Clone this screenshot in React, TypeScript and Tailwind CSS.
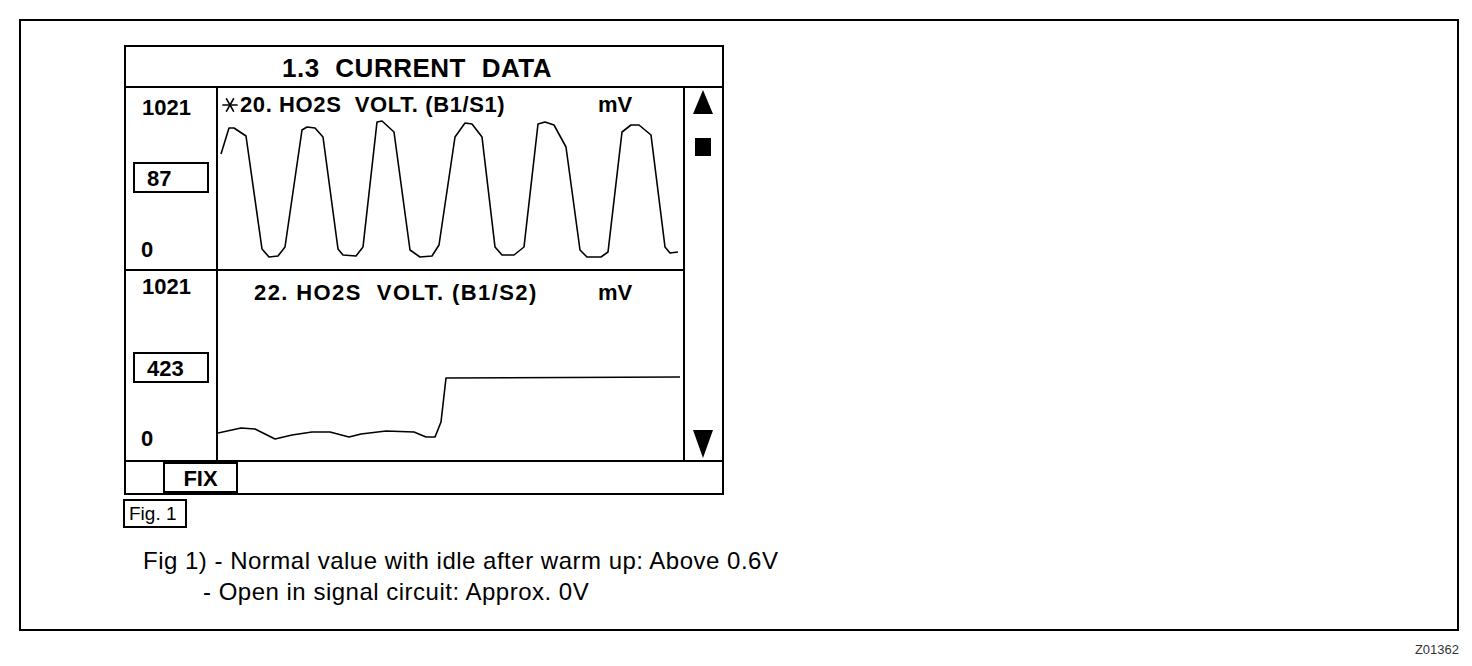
import React from "react";

// page coordinates, the svg viewBox of each chart cell starts where the cell does
const wave1 =
  "221,154 229,128 234,128 246,136 262,249 269,257 278,256 285,247 302,130 307,127 315,128 323,137 338,249 343,255 356,256 363,247 377,122 382,121 394,132 410,250 420,257 432,256 439,245 455,137 465,123 472,124 482,137 495,247 502,255 514,255 524,247 538,124 545,122 554,125 566,147 580,250 587,257 601,257 608,252 622,132 631,125 639,125 651,135 665,247 670,253 678,252";
const wave2 =
  "218,433 241,428 255,429 275,439 292,435 312,432 330,432 349,437 361,434 386,431 414,432 426,437 435,437 441,422 446,378 680,377";

const Star = () => (
  <svg width="16" height="16" viewBox="0 0 16 16" className="mr-[2px] inline-block">
    <g stroke="black" strokeWidth="1.7" strokeLinecap="round">
      <line x1="1" y1="8" x2="15" y2="8" />
      <line x1="11.5" y1="1.9" x2="4.5" y2="14.1" />
      <line x1="4.5" y1="1.9" x2="11.5" y2="14.1" />
    </g>
  </svg>
);

const ValueBox = ({ value }: { value: string }) => (
  <div className="ml-[7px] flex h-[31px] w-[76px] items-center border-2 border-black pl-[12px] pt-[2px] leading-[22px]">
    {value}
  </div>
);

const Row = ({
  value,
  title,
  star,
  points,
  viewBox,
  rowClass,
  labelClass,
  headClass,
  titleClass,
  boxGap,
}: {
  value: string;
  title: string;
  star?: boolean;
  points: string;
  viewBox: string;
  rowClass: string;
  labelClass: string;
  headClass: string;
  titleClass: string;
  boxGap: string;
}) => (
  <div className={"flex " + rowClass}>
    <div className={"flex w-[92px] flex-col border-r-2 border-black " + labelClass}>
      <div className="pl-[16px] leading-[22px]">1021</div>
      <div className={boxGap}>
        <ValueBox value={value} />
      </div>
      <div className="mt-auto pl-[15px] leading-[22px]">0</div>
    </div>
    <div className="relative w-[465px]">
      <svg
        className="absolute inset-0"
        width="465"
        height="100%"
        viewBox={viewBox}
        preserveAspectRatio="none"
      >
        <polyline
          points={points}
          fill="none"
          stroke="black"
          strokeWidth="1.6"
          strokeLinejoin="round"
        />
      </svg>
      <div className={"relative grid leading-[22px] " + headClass}>
        <div className={"flex items-center whitespace-pre " + titleClass}>
          {star && <Star />}
          {title}
        </div>
        <div>mV</div>
      </div>
    </div>
  </div>
);

const Arrow = ({ up }: { up?: boolean }) => (
  <svg width="20" height={up ? 24 : 28} viewBox={up ? "0 0 20 24" : "0 0 20 28"}>
    {up ? <polygon points="10,0 20,24 0,24" /> : <polygon points="0,0 20,0 10,28" />}
  </svg>
);

const Screen = () => (
  <div className="flex h-[450px] w-[600px] flex-col border-2 border-black text-[22px] font-bold">
    <div className="flex h-[41px] items-center justify-center border-b-2 border-black pr-[14px] pt-[3px] text-[26px] leading-[26px] tracking-[0.5px] [word-spacing:8px]">
      1.3 CURRENT DATA
    </div>
    <div className="flex h-[372px]">
      <div className="flex w-[557px] flex-col">
        <Row
          value="87"
          title="20. HO2S  VOLT. (B1/S1)"
          star
          points={wave1}
          viewBox="218 88 465 181"
          rowClass="h-[183px] border-b-2 border-black"
          labelClass="pt-[9px] pb-[8px]"
          headClass="grid-cols-[376px_auto] pt-[6px] pl-[4px]"
          titleClass="tracking-[0.6px]"
          boxGap="mt-[43px]"
        />
        <Row
          value="423"
          title="22. HO2S  VOLT. (B1/S2)"
          points={wave2}
          viewBox="218 271 465 189"
          rowClass="h-[189px]"
          labelClass="pt-[5px] pb-[10px]"
          headClass="grid-cols-[344px_auto] pt-[11px] pl-[36px]"
          titleClass="tracking-[1.4px]"
          boxGap="mt-[54px]"
        />
      </div>
      <div className="flex w-[39px] flex-col border-l-2 border-black pl-[8px]">
        <div className="mt-[2px]">
          <Arrow up />
        </div>
        <div className="ml-[2px] mt-[24px] h-[18px] w-[16px] bg-black" />
        <div className="mt-auto flex pb-[2px]">
          <Arrow />
        </div>
      </div>
    </div>
    <div className="flex flex-1 border-t-2 border-black">
      <div className="ml-[37px] flex h-full w-[75px] items-center justify-center border-2 border-black pt-[2px] leading-[22px]">
        FIX
      </div>
    </div>
  </div>
);

export default function App() {
  return (
    <div className="h-[666px] w-[1472px] overflow-hidden bg-white pl-[19px] pt-[19px] font-['Liberation_Sans',Arial,sans-serif] text-black">
      <div className="h-[612px] w-[1440px] border-2 border-black pl-[103px] pt-[24px]">
        <Screen />
        <div className="-ml-px mt-[4px] flex h-[29px] w-[64px] items-center border-2 border-black pl-[4px] text-[19px] leading-[19px]">
          Fig. 1
        </div>
        <div className="ml-[19px] mt-[17px] text-[24px] leading-[31px] tracking-[0.5px]">
          <div>Fig 1) - Normal value with idle after warm up: Above 0.6V</div>
          <div className="pl-[60px]">- Open in signal circuit: Approx. 0V</div>
        </div>
      </div>
      <div className="mt-[12px] w-[1440px] text-right text-[13px] leading-[13px] text-[#333]">
        Z01362
      </div>
    </div>
  );
}
